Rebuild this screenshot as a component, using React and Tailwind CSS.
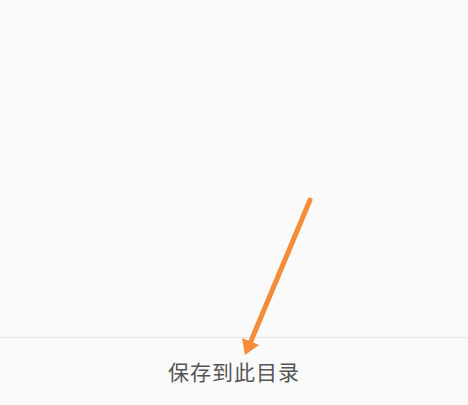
export default function App() {
  return (
    <div className="relative flex h-[405px] w-[468px] flex-col bg-[#fafafa]" style={{ fontFamily: '"Noto Sans CJK SC", "Noto Sans", sans-serif' }}>
      <div className="flex-1" />
      <div className="h-px bg-[#e6e6e6]" />
      <div className="flex h-[67px] items-center justify-center">
        <span className="text-[21px] tracking-[1px] text-[#555555]">保存到此目录</span>
      </div>

      {/* pointer arrow */}
      <svg className="absolute left-0 top-0" width="468" height="405" viewBox="0 0 468 405">
        <line x1="310" y1="200" x2="251" y2="341" stroke="#f68b3a" strokeWidth="5" strokeLinecap="round" />
        <polygon points="245,355 242,338 259,345" fill="#f68b3a" />
      </svg>
    </div>
  );
}
